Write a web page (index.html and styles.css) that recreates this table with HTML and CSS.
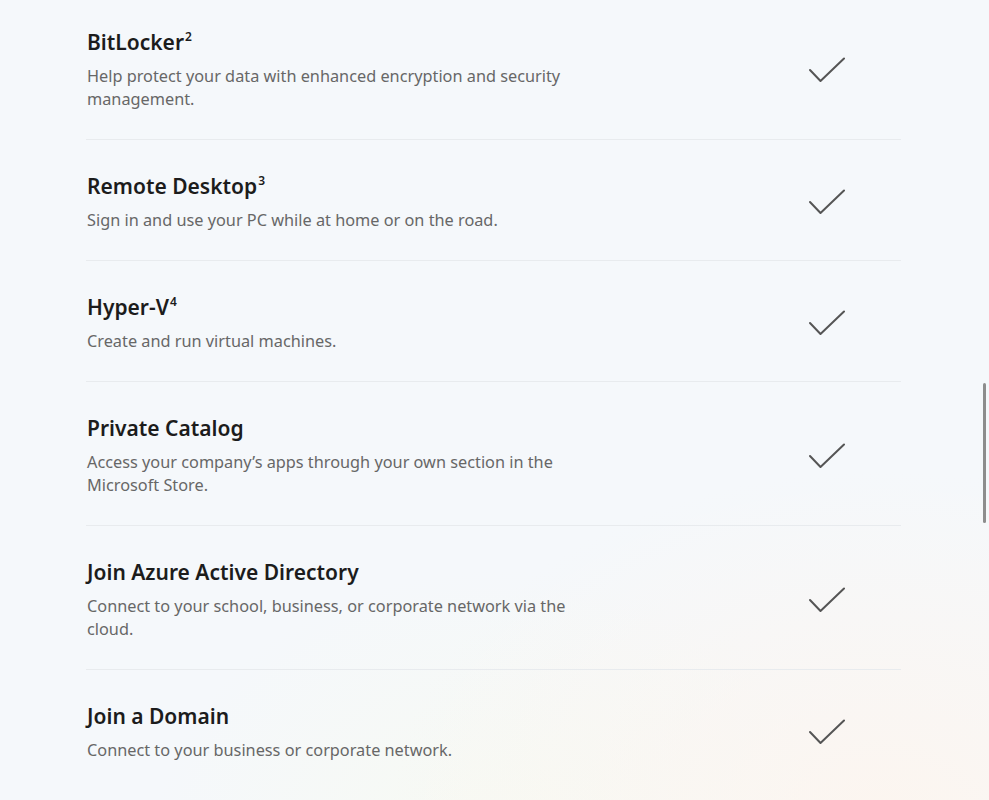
FILE: index.html
```html
<!DOCTYPE html>
<html>
<head>
<meta charset="utf-8">
<link rel="stylesheet" href="styles.css">
</head>
<body>
<main class="list">
  <section class="row first">
    <div class="text">
      <h3 class="title">BitLocker<sup>2</sup></h3>
      <p class="desc">Help protect your data with enhanced encryption and security management.</p>
    </div>
    <svg class="check" viewBox="0 0 36 26"><path d="M1 13 L11.5 24 L35 1.5"/></svg>
  </section>
  <section class="row">
    <div class="text">
      <h3 class="title">Remote Desktop<sup>3</sup></h3>
      <p class="desc">Sign in and use your PC while at home or on the road.</p>
    </div>
    <svg class="check" viewBox="0 0 36 26"><path d="M1 13 L11.5 24 L35 1.5"/></svg>
  </section>
  <section class="row">
    <div class="text">
      <h3 class="title">Hyper-V<sup>4</sup></h3>
      <p class="desc">Create and run virtual machines.</p>
    </div>
    <svg class="check" viewBox="0 0 36 26"><path d="M1 13 L11.5 24 L35 1.5"/></svg>
  </section>
  <section class="row">
    <div class="text">
      <h3 class="title">Private Catalog</h3>
      <p class="desc">Access your company’s apps through your own section in the Microsoft Store.</p>
    </div>
    <svg class="check" viewBox="0 0 36 26"><path d="M1 13 L11.5 24 L35 1.5"/></svg>
  </section>
  <section class="row">
    <div class="text">
      <h3 class="title">Join Azure Active Directory</h3>
      <p class="desc">Connect to your school, business, or corporate network via the cloud.</p>
    </div>
    <svg class="check" viewBox="0 0 36 26"><path d="M1 13 L11.5 24 L35 1.5"/></svg>
  </section>
  <section class="row last">
    <div class="text">
      <h3 class="title">Join a Domain</h3>
      <p class="desc">Connect to your business or corporate network.</p>
    </div>
    <svg class="check" viewBox="0 0 36 26"><path d="M1 13 L11.5 24 L35 1.5"/></svg>
  </section>
</main>
<div class="scrollbar"></div>
</body>
</html>
```
FILE: styles.css
```css
html, body {
  margin: 0;
  padding: 0;
  height: 100%;
  overflow: hidden;
}
body {
  font-family: "Noto Sans", "Open Sans", sans-serif;
  background:
    radial-gradient(ellipse 700px 500px at 880px 820px, rgba(253, 245, 238, 0.9), rgba(253, 245, 238, 0) 70%),
    radial-gradient(ellipse 500px 400px at 500px 850px, rgba(248, 250, 240, 0.8), rgba(248, 250, 240, 0) 70%),
    #f5f8fb;
  position: relative;
}
.list {
  margin: -4px 0 0 86px;
  width: 815px;
}
.row {
  display: flex;
  align-items: center;
  justify-content: space-between;
  padding: 32px 56px 28px 1px;
  border-bottom: 1px solid #e8ebee;
}
.row.last {
  border-bottom: none;
}
.text {
  max-width: 492px;
}
.title {
  margin: 0 0 9px;
  font-size: 21px;
  line-height: 28px;
  font-weight: 600;
  color: #1c1c1c;
}
.title sup {
  font-size: 12px;
  font-weight: 600;
  line-height: 0;
  vertical-align: 9px;
  margin-left: 1px;
}
.desc {
  margin: 0;
  font-size: 16.3px;
  line-height: 23px;
  color: #676767;
}
.check {
  width: 36px;
  height: 26px;
  fill: none;
  stroke: #555;
  stroke-width: 2;
  stroke-linecap: round;
  stroke-linejoin: round;
}
.scrollbar {
  position: absolute;
  left: 983px;
  top: 383px;
  width: 3px;
  height: 140px;
  border-radius: 2px;
  background: #8d8d8d;
}
```
